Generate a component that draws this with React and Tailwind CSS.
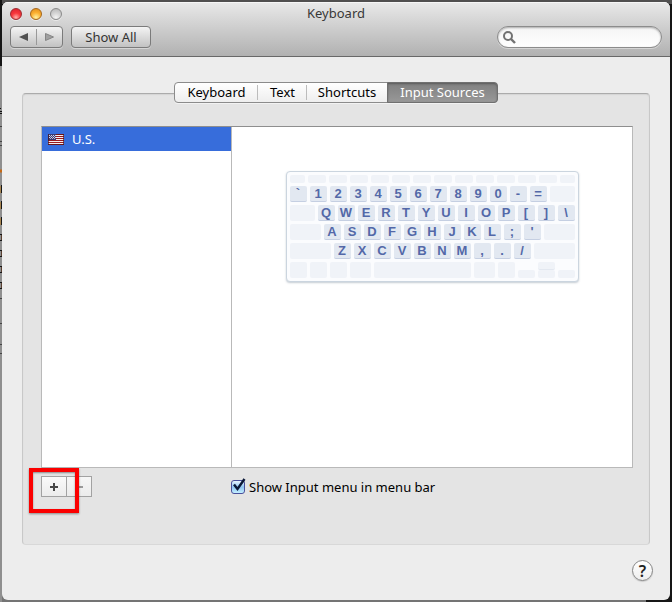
import React from "react";

const lights = [
  { label: "Close", cls: "border-[#9c2a30] bg-[radial-gradient(circle_at_50%_85%,#ffb0a8_0%,#f8383c_45%,#d81f2c_100%)]" },
  { label: "Minimize", cls: "border-[#a5661a] bg-[radial-gradient(circle_at_50%_85%,#fff3a0_0%,#fbb030_50%,#dc8a1c_100%)]" },
  { label: "Zoom", cls: "border-[#8a8a8a] bg-[radial-gradient(circle_at_50%_85%,#f4f4f4_0%,#d2d2d2_50%,#b4b4b4_100%)]" },
];

const tabs = [
  { name: "Keyboard", cls: "w-[83px]" },
  { name: "Text", cls: "w-[49px]" },
  { name: "Shortcuts", cls: "w-20" },
];

function Key({ children }) {
  return (
    <span className="flex h-4 w-[17px] items-center justify-center rounded-xs border-b border-[#c5cfe2] bg-[#e2e8f1] text-[13px] leading-none font-bold text-[#5368a8]">
      {children}
    </span>
  );
}

function Blank({ cls }) {
  return <span className={"rounded-xs bg-[#f0f3f8] " + cls} />;
}

function Keys({ chars }) {
  return chars.split("").map((c) => <Key key={c}>{c}</Key>);
}

function KeyboardPreview() {
  return (
    <div
      aria-label="U.S. keyboard layout"
      className="flex w-[293px] shrink-0 flex-col gap-[3px] rounded-sm border border-[#cbd5df] bg-[#fbfcfe] p-[3px] font-['Liberation_Sans',Arial,sans-serif] shadow-[0_1px_2px_rgba(90,110,130,0.35)]"
    >
      <div className="flex gap-[3px]">
        <Blank cls="h-2 w-[15px]" />
        {Array.from({ length: 12 }, (_, i) => (
          <Blank key={i} cls="h-2 w-[18px]" />
        ))}
        <Blank cls="h-2 w-[15px]" />
      </div>
      <div className="flex gap-[3px]">
        <Keys chars="`1234567890-=" />
        <Blank cls="h-4 flex-1" />
      </div>
      <div className="flex gap-[3px]">
        <Blank cls="h-4 flex-1" />
        <Keys chars="QWERTYUIOP[]\" />
      </div>
      <div className="flex gap-[3px]">
        <Blank cls="h-4 flex-1" />
        <Keys chars="ASDFGHJKL;'" />
        <Blank cls="h-4 flex-1" />
      </div>
      <div className="flex gap-[3px]">
        <Blank cls="h-4 flex-1" />
        <Keys chars="ZXCVBNM,./" />
        <Blank cls="h-4 flex-1" />
      </div>
      <div className="flex items-end gap-[3px]">
        <Blank cls="h-4 w-[17px]" />
        <Blank cls="h-4 w-[17px]" />
        <Blank cls="h-4 w-[17px]" />
        <Blank cls="h-4 w-[21px]" />
        <Blank cls="h-4 flex-1" />
        <Blank cls="h-4 w-[21px]" />
        <Blank cls="h-4 w-[17px]" />
        <Blank cls="h-2 w-[17px]" />
        <span className="flex flex-col">
          <Blank cls="h-2 w-[17px] border-b border-[#e3e8f0]" />
          <Blank cls="h-2 w-[17px]" />
        </span>
        <Blank cls="h-2 w-[17px]" />
      </div>
    </div>
  );
}

function Flag() {
  return (
    <svg width="16" height="11" viewBox="0 0 16 11" shapeRendering="crispEdges" aria-hidden="true">
      <rect width="16" height="11" fill="#f4eeee" />
      <path d="M0 0.5H16M0 10.5H16" stroke="#6e1418" />
      <path d="M0 2.5H16M0 4.5H16M0 6.5H16M0 8.5H16" stroke="#9c1a1e" />
      <rect width="8" height="6" fill="#3c3c70" />
      <path d="M1 1.5H8M1 3.5H8" stroke="#d8d8ea" strokeDasharray="1 1" />
      <path d="M2 2.5H8M2 4.5H8" stroke="#b4b4d2" strokeDasharray="1 1" />
      <path d="M0.5 0V11M15.5 0V11" stroke="#4a1520" strokeOpacity="0.7" />
    </svg>
  );
}

function DesktopEdge() {
  return (
    <svg className="absolute top-0 left-0" width="2" height="602" aria-hidden="true">
      <rect width="2" height="66" fill="#161616" />
      <rect y="66" width="2" height="536" fill="#8f8f8f" />
      <path d="M0 126.5H2M0 141.5H2M0 145.5H2M0 298.5H2M0 323.5H2M0 344.5H2M0 353.5H2" stroke="#444" />
      <path d="M0 108.5H1M0 111.5H2M0 113.5H2" stroke="#111" />
      <path d="M0 171H2" stroke="#c66a16" strokeWidth="3" />
      <path d="M1.5 185V193M1.5 201V209M1.5 217V225" stroke="#161616" />
      <path d="M0.5 186V193M0.5 202V209M0.5 218V225" stroke="#a88550" />
      <path d="M0 234.5H2M0 240.5H2M0 250.5H2M0 256.5H2M0 266.5H2M0 272.5H2M0 282.5H2M0 288.5H2" stroke="#161616" />
      <path d="M1.5 235V240M1.5 251V256M1.5 267V272M1.5 283V288" stroke="#5b4030" />
    </svg>
  );
}

export default function App() {
  return (
    <div className="relative flex min-h-screen flex-col bg-[#161616] p-[2px] font-['Noto_Sans','Open_Sans',sans-serif] text-[13px] leading-4 text-black">
      <div className="absolute inset-x-0 top-0 h-1 bg-[#504f4f]" />
      <div className="absolute bottom-0 left-0 h-2 w-[646px] bg-[#747474]" />
      <DesktopEdge />
      <main className="relative flex flex-1 flex-col overflow-hidden rounded-md bg-[#ededed]">
        <header className="flex h-[55px] shrink-0 flex-col gap-1 border-b border-[#686868] bg-linear-to-b from-[#e9e9e9] to-[#b1b1b1] px-2 pt-[3px] shadow-[inset_0_1px_0_#f6f6f6]">
          <div className="grid grid-cols-[1fr_auto_1fr] items-center">
            <div className="flex gap-2">
              {lights.map((l) => (
                <button key={l.label} aria-label={l.label} className={"size-3 rounded-full border shadow-[0_1px_0_rgba(255,255,255,0.5)] " + l.cls} />
              ))}
            </div>
            <h1 className="h-[17px] leading-4 text-[#383838]">Keyboard</h1>
          </div>
          <div className="flex items-center gap-2">
            <div className="flex h-[22px] w-[53px] items-center rounded border border-[#7b7b7b] bg-linear-to-b from-[#f4f4f4] to-[#c2c2c2] shadow-[0_1px_0_rgba(255,255,255,0.4)]">
              <button aria-label="Back" className="flex h-4 flex-1 items-center justify-center border-r border-[#999]">
                <svg width="9" height="8" viewBox="0 0 9 8"><path d="M9 0V8L0 4Z" fill="#505050" /></svg>
              </button>
              <button aria-label="Forward" className="flex h-4 flex-1 items-center justify-center">
                <svg width="9" height="8" viewBox="0 0 9 8"><path d="M0.5 0.5V7.5L8.5 4Z" fill="#a0a0a0" stroke="#848484" /></svg>
              </button>
            </div>
            <button className="h-[22px] w-20 rounded border border-[#7b7b7b] bg-linear-to-b from-[#f4f4f4] to-[#c2c2c2] text-[#333] shadow-[0_1px_0_rgba(255,255,255,0.4)]">
              Show All
            </button>
            <label className="ml-auto flex h-[22px] w-[165px] items-center rounded-full border border-[#8c8c8c] bg-linear-to-b from-[#f5f5f5] to-white pl-[5px] shadow-[inset_0_1px_2px_rgba(0,0,0,0.3),0_1px_0_rgba(255,255,255,0.4)]">
              <svg width="13" height="13" viewBox="0 0 13 13" fill="none" stroke="#727272" strokeWidth="2" aria-hidden="true">
                <circle cx="5" cy="5" r="4" />
                <path d="M8 8L12 12" strokeWidth="2.4" />
              </svg>
              <input type="search" aria-label="Search" className="min-w-0 flex-1 bg-transparent px-1 outline-none" />
            </label>
          </div>
        </header>

        <div className="flex flex-1 flex-col px-5 pt-[25px] pb-[55px]">
          <div role="tablist" className="relative z-10 -mb-[10px] flex h-[21px] self-center rounded border border-[#8b8b8b] bg-linear-to-b from-white to-[#eeeeee] shadow-[0_1px_0_rgba(255,255,255,0.5)]">
            {tabs.map((t, i) => (
              <button key={t.name} role="tab" aria-selected="false" className={"relative flex items-center justify-center pb-px " + t.cls}>
                {t.name}
                {i < 2 && <span className="absolute inset-y-[2px] right-0 w-px bg-[#bcbcbc]" />}
              </button>
            ))}
            <button role="tab" aria-selected="true" className="-my-px -mr-px flex w-[111px] items-center justify-center rounded-r border border-[#707070] bg-linear-to-b from-[#808080] to-[#989898] pb-px text-white shadow-[inset_0_1px_2px_rgba(0,0,0,0.3)]">
              Input Sources
            </button>
          </div>

          <section className="flex flex-1 flex-col rounded border border-[#c8c8c8] border-t-[#ababab] border-b-[#d8d8d8] bg-[#e4e4e4] px-[18px] pt-8 pr-4 shadow-[inset_0_1px_1px_#d4d4d4]">
            <div className="flex flex-1 border border-[#b9b9b9] border-t-[#8e8e8e] bg-white">
              <ul className="w-[190px] border-r border-[#b9b9b9]">
                <li className="flex h-6 items-center gap-2 bg-[#376ddb] pl-[6px] text-white">
                  <Flag />
                  U.S.
                </li>
              </ul>
              <div className="flex flex-1 items-start justify-center pt-11">
                <KeyboardPreview />
              </div>
            </div>
            <div className="flex h-[76px] items-start pt-2">
              <div className="relative flex w-[190px]">
                <button aria-label="Add input source" className="flex h-[21px] w-[26px] items-center justify-center border border-[#a2a2a2] bg-linear-to-b from-[#fafafa] to-[#ececec]">
                  <svg width="8" height="8" shapeRendering="crispEdges"><path d="M4 0V8M0 4H8" stroke="#484848" strokeWidth="2" /></svg>
                </button>
                <button aria-label="Remove input source" disabled className="-ml-px flex h-[21px] w-[26px] items-center justify-center border border-[#a2a2a2] bg-linear-to-b from-[#f6f6f6] to-[#ececec]">
                  <svg width="8" height="8" shapeRendering="crispEdges"><path d="M0 4H8" stroke="#9a9a9a" strokeWidth="2" /></svg>
                </button>
                <div className="pointer-events-none absolute -top-2 -left-3 h-[45px] w-[50px] border-4 border-[#fb0000] shadow-[0_1px_2px_rgba(0,0,0,0.4),inset_0_1px_2px_rgba(0,0,0,0.4)]" />
              </div>
              <label className="flex items-center gap-1 pt-[3px]">
                <span className="relative flex size-[14px]">
                  <input type="checkbox" defaultChecked className="peer size-[14px] appearance-none rounded-[3px] border border-[#4a509c] bg-linear-to-b from-[#eaf6ff] via-[#8fc4f2] to-[#c4f0ff]" />
                  <svg className="pointer-events-none absolute -top-[2px] left-0 hidden peer-checked:block" width="16" height="14" viewBox="0 0 16 14" fill="none" aria-hidden="true">
                    <path d="M3 6.5L6.5 11L13.5 1" stroke="#0b1838" strokeWidth="2.4" />
                  </svg>
                </span>
                Show Input menu in menu bar
              </label>
            </div>
          </section>
        </div>
        <button aria-label="Help" className="absolute right-[17px] bottom-[19px] flex size-[21px] items-center justify-center rounded-full border border-[#858585] bg-linear-to-b from-white to-[#eeeeee] text-base font-semibold text-[#222] shadow-[0_1px_1px_rgba(0,0,0,0.15)]">
          ?
        </button>
      </main>
    </div>
  );
}
